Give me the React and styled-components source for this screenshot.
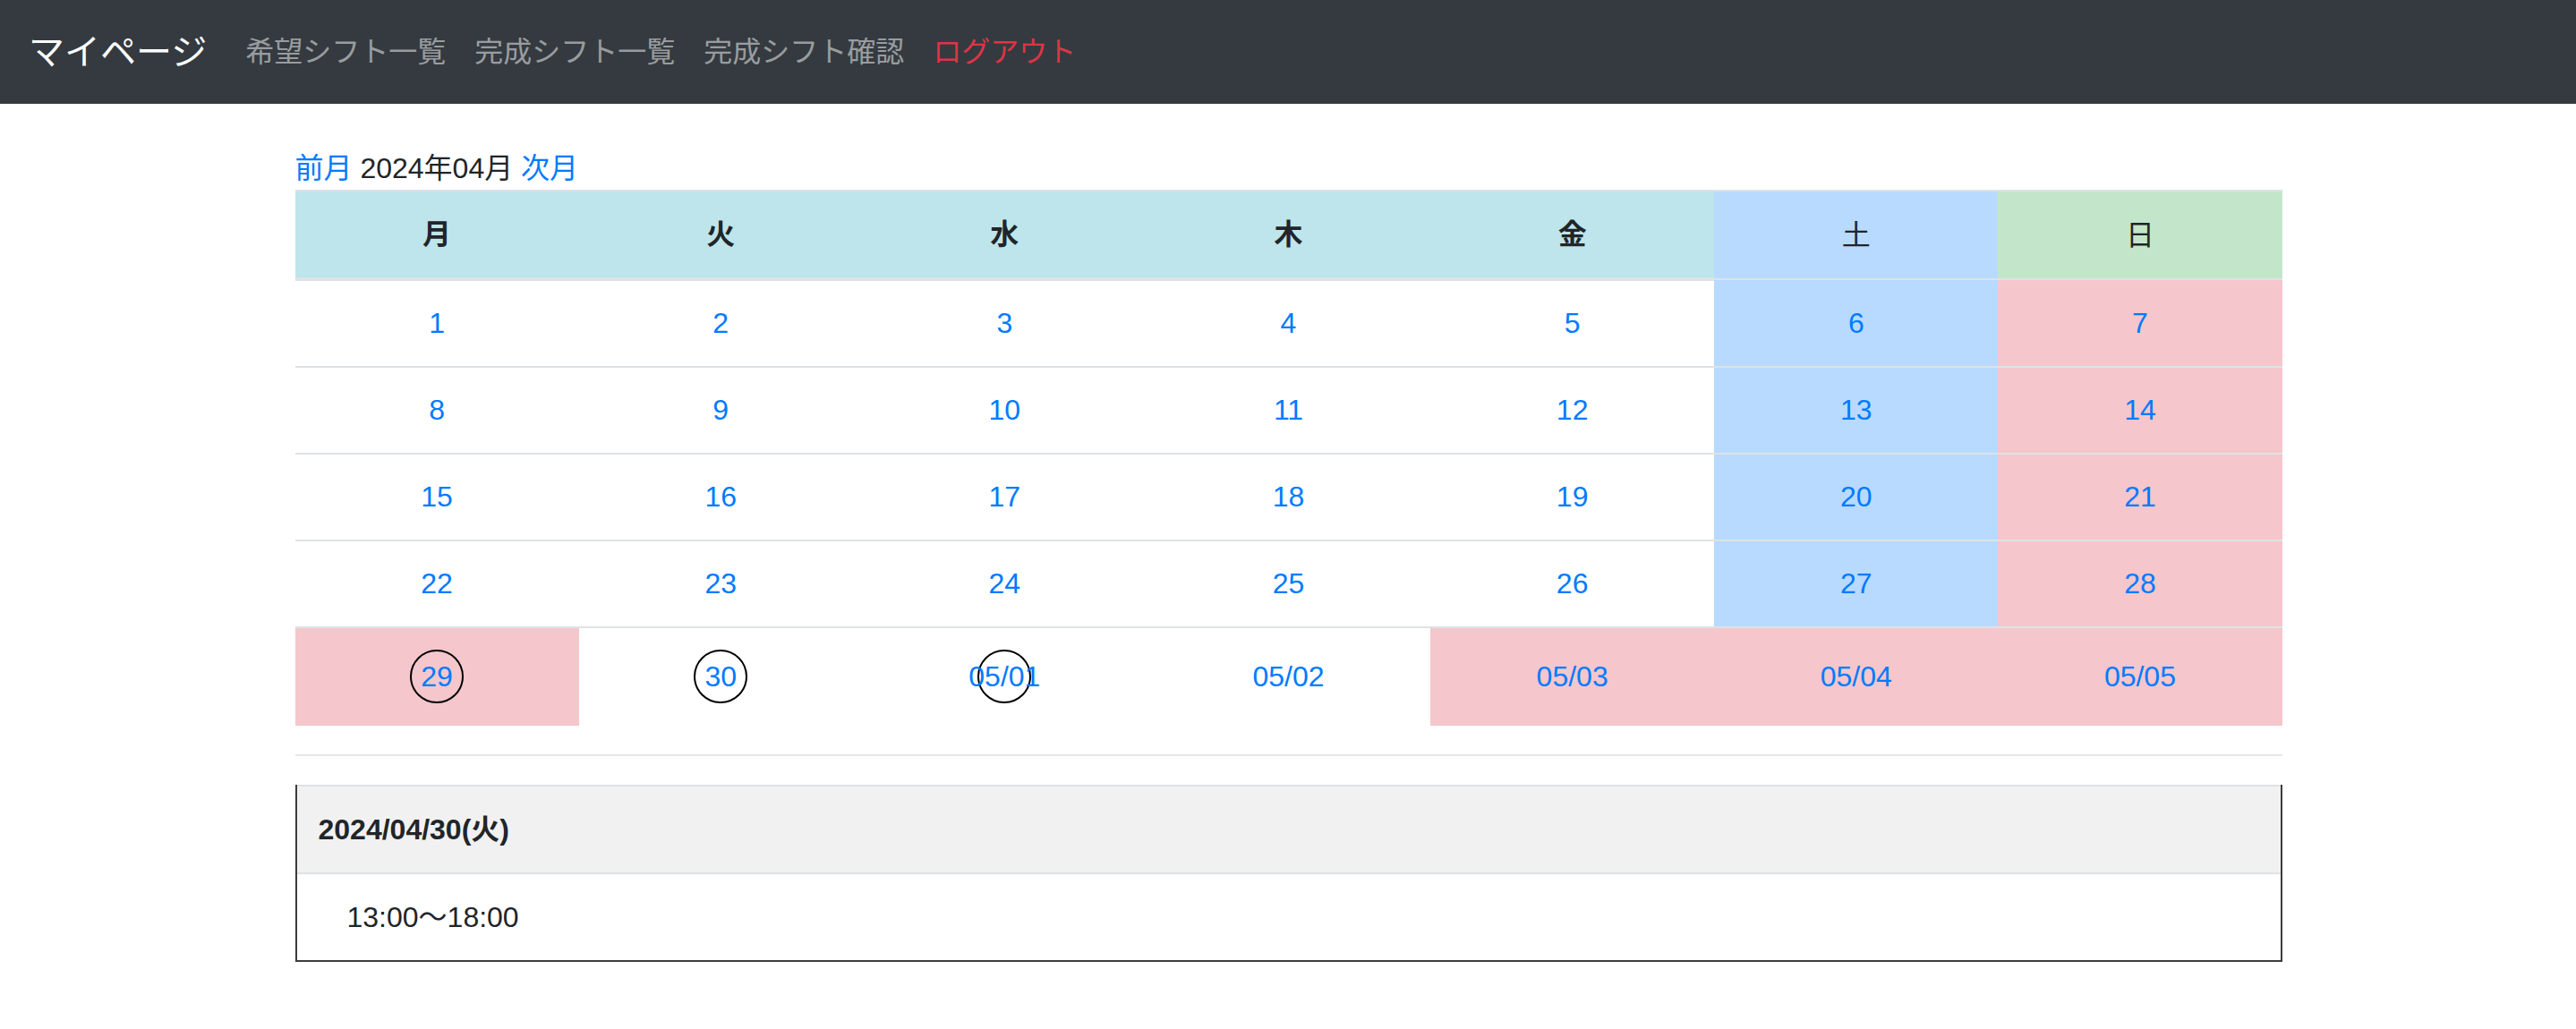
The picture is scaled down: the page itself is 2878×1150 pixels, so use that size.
import React from "react";
import { styled, createGlobalStyle } from "styled-components";

const GlobalStyle = createGlobalStyle`
  body {
    margin: 0;
    background: #fff;
    color: #212529;
    font-family: "Liberation Sans", "Noto Sans CJK JP", sans-serif;
    font-size: 32px;
    line-height: 1.5;
  }
`;

const HEADS = [
  { label: "月" },
  { label: "火" },
  { label: "水" },
  { label: "木" },
  { label: "金" },
  { label: "土", tone: "sat", plain: true },
  { label: "日", tone: "sun", plain: true },
];

const week = (days) =>
  days.map((d, i) => ({
    label: String(d),
    tone: i === 5 ? "sat" : i === 6 ? "holiday" : undefined,
  }));

const WEEKS = [
  week([1, 2, 3, 4, 5, 6, 7]),
  week([8, 9, 10, 11, 12, 13, 14]),
  week([15, 16, 17, 18, 19, 20, 21]),
  week([22, 23, 24, 25, 26, 27, 28]),
  [
    { label: "29", tone: "holiday", circled: true },
    { label: "30", circled: true },
    { label: "05/01", circled: true },
    { label: "05/02" },
    { label: "05/03", tone: "holiday" },
    { label: "05/04", tone: "holiday" },
    { label: "05/05", tone: "holiday" },
  ],
];

const MyPage = () => {
  return (
    <>
      <GlobalStyle />
      <Navbar>
        <Brand>マイページ</Brand>
        <NavList>
          <NavLink>希望シフト一覧</NavLink>
          <NavLink>完成シフト一覧</NavLink>
          <NavLink>完成シフト確認</NavLink>
          <NavLink danger>ログアウト</NavLink>
        </NavList>
      </Navbar>
      <Container>
        <MonthNav>
          <Link>前月</Link> 2024年04月 <Link>次月</Link>
        </MonthNav>
        <Calendar>
          <thead>
            <tr>
              {HEADS.map((h) => (
                <HeadCell key={h.label} tone={h.tone} plain={h.plain}>
                  {h.label}
                </HeadCell>
              ))}
            </tr>
          </thead>
          <tbody>
            {WEEKS.map((w, i) => (
              <tr key={i}>
                {w.map((d) => (
                  <DayCell key={d.label} tone={d.tone}>
                    {d.circled ? (
                      <Circle>
                        <Link>{d.label}</Link>
                      </Circle>
                    ) : (
                      <Link>{d.label}</Link>
                    )}
                  </DayCell>
                ))}
              </tr>
            ))}
          </tbody>
        </Calendar>
        <Rule />
        <ShiftCard>
          <ShiftHeader>2024/04/30(火)</ShiftHeader>
          <ShiftBody>13:00〜18:00</ShiftBody>
        </ShiftCard>
      </Container>
    </>
  );
};

const TONES = {
  head: "#bee5eb",
  sat: "#b8daff",
  sun: "#c3e6cb",
  holiday: "#f5c6cb",
};

const Navbar = styled.nav`
  display: flex;
  align-items: center;
  padding: 16px 32px;
  background-color: #343a40;
`;
const Brand = styled.div`
  padding: 12px 0;
  margin-right: 27px;
  font-size: 40px;
  line-height: 60px;
  color: #fff;
  white-space: nowrap;
`;
const NavList = styled.div`
  display: flex;
  align-items: center;
`;
const NavLink = styled.a`
  padding: 16px;
  color: ${({ danger }) => (danger ? "#dc3545" : "rgba(255, 255, 255, 0.5)")};
  white-space: nowrap;
`;
const Container = styled.main`
  width: 2220px;
  margin: 48px auto 0;
  padding-left: 1px;
`;
const MonthNav = styled.div`
  white-space: pre;
`;
const Link = styled.a`
  color: #007bff;
`;
const Calendar = styled.table`
  width: 100%;
  table-layout: fixed;
  border-collapse: collapse;
  margin-bottom: 32px;
  text-align: center;
`;
const HeadCell = styled.th`
  padding: 24px;
  border-top: 2px solid #dee2e6;
  border-bottom: ${({ plain }) => (plain ? "0" : "4px solid #dee2e6")};
  background-color: ${({ tone }) => TONES[tone || "head"]};
  font-weight: ${({ plain }) => (plain ? 400 : 700)};
`;
const DayCell = styled.td`
  padding: 23px 24px 24px;
  border-top: 2px solid #dee2e6;
  background-color: ${({ tone }) => (tone ? TONES[tone] : "transparent")};
`;
const Circle = styled.span`
  display: inline-flex;
  justify-content: center;
  align-items: center;
  box-sizing: border-box;
  width: 60px;
  height: 60px;
  margin: 1px 0;
  border: 2px solid #000;
  border-radius: 50%;
  vertical-align: middle;
  white-space: nowrap;
`;
const Rule = styled.hr`
  margin: 32px 0;
  border: 0;
  border-top: 2px solid #e6e6e6;
`;
const ShiftCard = styled.section`
  border: 2px solid #3c3c3c;
  border-top: 0;
`;
const ShiftHeader = styled.div`
  padding: 24px;
  border-top: 2px solid #dee2e6;
  background-color: #f1f1f1;
  font-weight: 700;
`;
const ShiftBody = styled.div`
  padding: 24px 24px 24px 56px;
  border-top: 2px solid #dee2e6;
`;

export default MyPage;
